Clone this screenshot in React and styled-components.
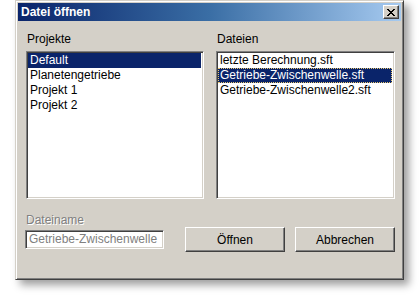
import styled, { createGlobalStyle } from 'styled-components';

const GlobalStyle = createGlobalStyle`
  html, body {
    margin: 0;
    padding: 0;
    background: #ffffff;
  }
  body {
    font-family: "Liberation Sans", Arial, sans-serif;
    font-size: 12px;
    color: #000;
  }
`;

const Page = styled.div`
  width: 420px;
  height: 295px;
  padding: 0 0 0 15px;
  box-sizing: border-box;
`;

const Window = styled.div`
  width: 389px;
  height: 280px;
  box-sizing: border-box;
  background: #d4d0c8;
  border: 1px solid;
  border-color: #d4d0c8 #404040 #404040 #d4d0c8;
  box-shadow: inset 1px 1px 0 #ffffff, inset -1px -1px 0 #808080, 5px 5px 8px rgba(0, 0, 0, 0.38);
  padding: 2px;
  display: flex;
  flex-direction: column;
`;

const TitleBar = styled.div`
  height: 18px;
  display: flex;
  align-items: center;
  justify-content: space-between;
  padding: 0 2px 0 3px;
  background: linear-gradient(to right, #0a246a 0%, #3a6ea5 50%, #a6caf0 100%);
`;

const Title = styled.span`
  color: #ffffff;
  font-weight: bold;
  font-size: 12px;
`;

const CloseButton = styled.div`
  width: 16px;
  height: 14px;
  box-sizing: border-box;
  background: #d4d0c8;
  border: 1px solid;
  border-color: #ffffff #404040 #404040 #ffffff;
  box-shadow: inset -1px -1px 0 #808080;
  display: flex;
  align-items: center;
  justify-content: center;
`;

const Body = styled.div`
  flex: 1;
  padding: 11px 6px 0 8px;
  display: flex;
  flex-direction: column;
`;

const Columns = styled.div`
  display: grid;
  grid-template-columns: 178px 179px;
  column-gap: 12px;
`;

const Column = styled.div`
  display: flex;
  flex-direction: column;
`;

const Label = styled.div`
  height: 14px;
  line-height: 14px;
  padding-left: 1px;
  margin-bottom: 5px;
  color: ${p => (p.$disabled ? '#808080' : '#000')};
  text-shadow: ${p => (p.$disabled ? '1px 1px 0 #ffffff' : 'none')};
`;

const ListBox = styled.div`
  height: 148px;
  box-sizing: border-box;
  background: #ffffff;
  border: 1px solid;
  border-color: #808080 #ffffff #ffffff #808080;
  box-shadow: inset 1px 1px 0 #404040, inset -1px -1px 0 #d4d0c8;
  padding: 1px 2px 2px 1px;
`;

const Item = styled.div`
  height: 15px;
  line-height: 15px;
  padding-left: 2px;
  white-space: nowrap;
  background: ${p => (p.$selected ? '#0a246a' : 'transparent')};
  color: ${p => (p.$selected ? '#ffffff' : '#000000')};
  outline: ${p => (p.$focused ? '1px dotted #e8c870' : 'none')};
  outline-offset: -1px;
`;

const Footer = styled.div`
  margin-top: 15px;
  display: flex;
  flex-direction: column;
`;

const FooterLabel = styled(Label)`
  margin-bottom: 0;
  margin-left: -1px;
  height: 13px;
  line-height: 13px;
`;

const ControlRow = styled.div`
  display: flex;
  align-items: center;
  height: 25px;
`;

const TextBox = styled.div`
  width: 139px;
  height: 19px;
  margin-left: -1px;
  box-sizing: border-box;
  background: #ffffff;
  border: 1px solid;
  border-color: #808080 #ffffff #ffffff #808080;
  box-shadow: inset 1px 1px 0 #404040, inset -1px -1px 0 #d4d0c8;
  padding: 0 3px;
  line-height: 17px;
  color: #808080;
  white-space: nowrap;
  overflow: hidden;
`;

const Button = styled.div`
  width: 100px;
  height: 25px;
  margin-left: ${p => (p.$first ? 'auto' : '10px')};
  box-sizing: border-box;
  background: #d4d0c8;
  border: 1px solid;
  border-color: #ffffff #404040 #404040 #ffffff;
  box-shadow: inset -1px -1px 0 #808080;
  display: flex;
  align-items: center;
  justify-content: center;
`;

const projects = ['Default', 'Planetengetriebe', 'Projekt 1', 'Projekt 2'];
const files = ['letzte Berechnung.sft', 'Getriebe-Zwischenwelle.sft', 'Getriebe-Zwischenwelle2.sft'];

export default function App() {
  return (
    <>
      <GlobalStyle />
      <Page>
        <Window>
          <TitleBar>
            <Title>Datei öffnen</Title>
            <CloseButton>
              <svg width="8" height="7" viewBox="0 0 8 7">
                <path d="M0 0h2v1h1v1h2V1h1V0h2v1H7v1H6v1H5v1h1v1h1v1h1v1H6V6H5V5H3v1H2v1H0V6h1V5h1V4h1V3H2V2H1V1H0z" fill="#000" />
              </svg>
            </CloseButton>
          </TitleBar>
          <Body>
            <Columns>
              <Column>
                <Label>Projekte</Label>
                <ListBox>
                  {projects.map((p, i) => (
                    <Item key={p} $selected={i === 0}>{p}</Item>
                  ))}
                </ListBox>
              </Column>
              <Column>
                <Label>Dateien</Label>
                <ListBox>
                  {files.map((f, i) => (
                    <Item key={f} $selected={i === 1} $focused={i === 1}>{f}</Item>
                  ))}
                </ListBox>
              </Column>
            </Columns>
            <Footer>
              <FooterLabel $disabled>Dateiname</FooterLabel>
              <ControlRow>
                <TextBox>Getriebe-Zwischenwelle</TextBox>
                <Button $first>Öffnen</Button>
                <Button>Abbrechen</Button>
              </ControlRow>
            </Footer>
          </Body>
        </Window>
      </Page>
    </>
  );
}
